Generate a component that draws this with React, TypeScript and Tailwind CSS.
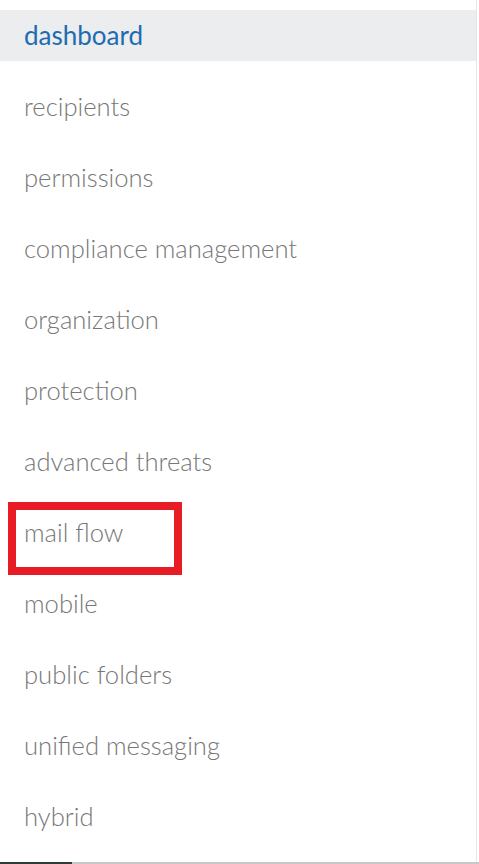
const items = [
  "recipients",
  "permissions",
  "compliance management",
  "organization",
  "protection",
  "advanced threats",
  "mail flow",
  "mobile",
  "public folders",
  "unified messaging",
  "hybrid",
];

export default function App() {
  return (
    <div
      className="relative h-[864px] w-[479px] overflow-hidden bg-white"
      style={{ fontFamily: 'Lato, "Open Sans", sans-serif' }}
    >
      {/* Nav list */}
      <div className="flex w-[477px] flex-col gap-[20px] border-r border-[#e6e6e6] pt-[10px] h-[862px]">
        <div className="flex h-[51px] items-center bg-[#ebedef] pl-6 text-[26px] font-normal text-[#1e6cb0]">
          dashboard
        </div>
        {items.map((item) => (
          <div
            key={item}
            className="relative flex h-[51px] items-center pl-6 text-[25.6px] font-light text-[#777777]"
          >
            {item}
            {item === "mail flow" && (
              <div className="absolute left-[8px] top-[-5px] h-[73px] w-[174px] border-[8px] border-[#e81c24]" />
            )}
          </div>
        ))}
      </div>

      {/* Bottom rule */}
      <div className="flex h-[2px] w-full">
        <div className="h-full w-[72px] bg-[#2f3b3b]" />
        <div className="h-full flex-1 bg-[#c8c8c8]" />
      </div>
    </div>
  );
}
